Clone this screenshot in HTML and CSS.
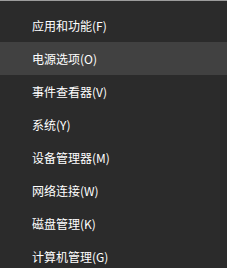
FILE: index.html
```html
<!DOCTYPE html>
<html lang="zh-CN">
<head>
    <meta charset="UTF-8">
    <title>快速链接菜单</title>
    <link rel="stylesheet" href="styles.css">
</head>
<body>
    <div class="menu">
        <div class="item">应用和功能(F)</div>
        <div class="item active">电源选项(O)</div>
        <div class="item">事件查看器(V)</div>
        <div class="item">系统(Y)</div>
        <div class="item">设备管理器(M)</div>
        <div class="item">网络连接(W)</div>
        <div class="item">磁盘管理(K)</div>
        <div class="item">计算机管理(G)</div>
    </div>
</body>
</html>
```

FILE: styles.css
```css
html, body {
    margin: 0;
    background: #2b2b2b;
}
body {
    font-family: "Noto Sans CJK SC", "Noto Sans", sans-serif;
    font-size: 12px;
    color: #ffffff;
    overflow: hidden;
}
.menu {
    border-top: 1px solid #9c9c9c;
    padding-top: 8px;
}
.item {
    height: 33px;
    line-height: 33px;
    padding-left: 32px;
}
.active {
    background: #414141;
}
```
